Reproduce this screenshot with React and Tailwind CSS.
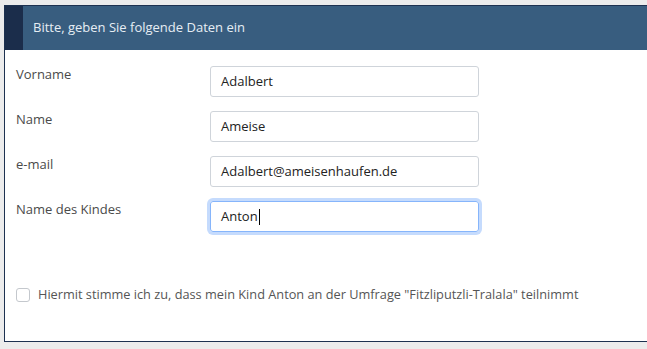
import React from "react";

const fields = [
    { label: "Vorname", value: "Adalbert" },
    { label: "Name", value: "Ameise" },
    { label: "e-mail", value: "Adalbert@ameisenhaufen.de" },
    { label: "Name des Kindes", value: "Anton", focused: true },
];

export default function App() {
    return (
        <div
            className="h-[349px] w-[647px] overflow-hidden bg-[#ececec] pt-[5px] pl-[4px]"
            style={{ fontFamily: '"Open Sans", "Noto Sans", sans-serif' }}
        >
            <div className="h-[337px] border-t border-l border-b border-[#1d3150] bg-white">
                {/* Kopfzeile */}
                <div className="flex h-[44px]">
                    <div className="w-[18px] bg-[#1b2d4b]" />
                    <div className="flex flex-1 items-center bg-[#385d7f] pl-[10px] text-[13px] text-[#e6edf4]">
                        Bitte, geben Sie folgende Daten ein
                    </div>
                </div>

                {/* Formular */}
                <div className="flex flex-col gap-[14px] pt-[16px] pl-[11px]">
                    {fields.map((f) => (
                        <div key={f.label} className="flex items-start">
                            <div className="w-[194px] text-[13px] leading-[16px] text-[#4a4a4a]">
                                {f.label}
                            </div>
                            {f.focused ? (
                                <div className="flex h-[31px] w-[269px] items-center rounded-[3px] border border-[#86b5fb] pl-[10px] text-[13px] text-[#222] ring-[3px] ring-[#c5dbfd]">
                                    {f.value}
                                    <span className="ml-px inline-block h-[16px] w-px bg-black" />
                                </div>
                            ) : (
                                <div className="flex h-[31px] w-[269px] items-center rounded-[3px] border border-[#cfd4da] pl-[10px] text-[13px] text-[#222]">
                                    {f.value}
                                </div>
                            )}
                        </div>
                    ))}
                </div>

                {/* Zustimmung */}
                <div className="mt-[53px] flex items-center pl-[11px]">
                    <span className="h-[14px] w-[14px] rounded-[3px] border border-[#c4c8cd] bg-white" />
                    <span className="ml-[8px] text-[12.75px] text-[#555]">
                        Hiermit stimme ich zu, dass mein Kind Anton an der Umfrage "Fitzliputzli-Tralala" teilnimmt
                    </span>
                </div>
            </div>
        </div>
    );
}
